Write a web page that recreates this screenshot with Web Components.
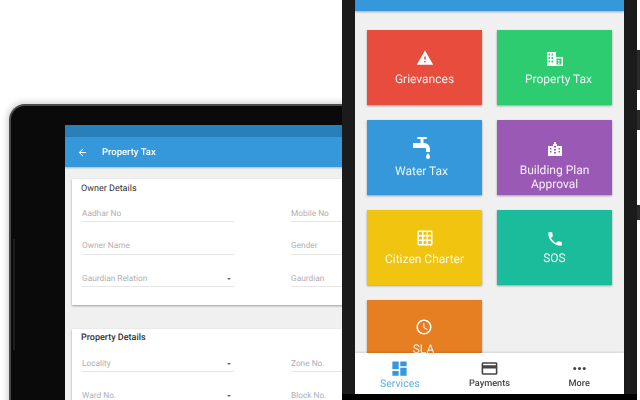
<!DOCTYPE html>
<html lang="en"><head><meta charset="utf-8"><title>Mobile app</title>
<style>
html,body{margin:0;padding:0;background:#fff;height:400px;overflow:hidden;font-family:Roboto,"Liberation Sans",sans-serif;text-rendering:geometricPrecision}
</style></head><body>
<app-stage>
  <tablet-device title-text="Property Tax">
    <form-card heading="Owner Details">
      <form-field>Aadhar No</form-field><form-field>Mobile No</form-field>
      <form-field>Owner Name</form-field><form-field>Gender</form-field>
      <form-field select>Gaurdian Relation</form-field><form-field>Gaurdian</form-field>
    </form-card>
    <form-card heading="Property Details" strong>
      <form-field select>Locality</form-field><form-field>Zone No.</form-field>
      <form-field select>Ward No.</form-field><form-field>Block No.</form-field>
    </form-card>
  </tablet-device>
  <phone-device>
    <service-tile color="#e74c3c" style="--pad:19px;--gap:8px">
      <svg slot="icon" width="18" height="18" viewBox="0 0 24 24"><path fill="#fff" d="M1 21h22L12 2 1 21zm12-3h-2v-2h2v2zm0-4h-2v-4h2v4z"/></svg>Grievances</service-tile>
    <service-tile color="#2ecc71" style="--pad:22px;--gap:5px;--text-x:4px">
      <svg slot="icon" width="16" height="14" viewBox="0 0 16 14"><path fill="#fff" fill-rule="evenodd" d="M0 0h9v5h7v9H0zM1.500 1.500v2h1.500v-2zm3 0v2H6v-2zM1.500 5v2h1.500V5zm3 0v2H6V5zM1.500 8.500v2h1.500v-2zm3 0v2H6v-2zM9.500 6.500v6h5v-6zM11 8h1.500v1.500H11zm0 2.500h1.500V12H11z"/></svg>Property Tax</service-tile>
    <service-tile color="#3498db" style="--pad:17px;--gap:5px;--icon-h:22px;--all-x:-3px">
      <svg slot="icon" width="18" height="22" viewBox="0 0 18 22"><path fill="#fff" d="M5 0h8a1 1 0 0 1 0 2h-2.500v4.500h-3V2H5a1 1 0 0 1 0-2zM0 6h10.500c4 0 6.500 2.500 6.500 6v3h-4v-2.500c0-1-.7-1.500-1.700-1.500H0zM15 16c1.500 2 2 3 2 4a2 2 0 0 1-4 0c0-1 .5-2 2-4z"/></svg>Water Tax</service-tile>
    <service-tile color="#9b59b6" style="--pad:22px;--gap:6px">
      <svg slot="icon" width="14" height="14" viewBox="0 0 14 14"><path fill="#fff" fill-rule="evenodd" d="M5 2h1V0h2v2h1v2h5v10H0V4h5zM6 4v1.500h2V4zM2 6v1.500h1.500V6zm4 1v1.500h2V7zm4.500-1v1.500H12V6zM2 9v1.500h1.500V9zm4 1v1.500h2V10zm4.500-1v1.500H12V9z"/></svg>Building Plan Approval</service-tile>
    <service-tile color="#f1c40f" style="--pad:19px;--gap:8px">
      <svg slot="icon" width="18" height="18" viewBox="0 0 24 24"><path fill="#fff" d="M20 2H4c-1.100 0-2 .9-2 2v16c0 1.100.9 2 2 2h16c1.100 0 2-.9 2-2V4c0-1.100-.9-2-2-2zM8 20H4v-4h4v4zm0-6H4v-4h4v4zm0-6H4V4h4v4zm6 12h-4v-4h4v4zm0-6h-4v-4h4v4zm0-6h-4V4h4v4zm6 12h-4v-4h4v4zm0-6h-4v-4h4v4zm0-6h-4V4h4v4z"/></svg>Citizen Charter</service-tile>
    <service-tile color="#1abc9c" style="--pad:20px;--gap:6px">
      <svg slot="icon" width="18" height="18" viewBox="0 0 24 24"><path fill="#fff" d="M6.620 10.790c1.440 2.830 3.760 5.140 6.590 6.590l2.200-2.200c.27-.27.67-.36 1.020-.24 1.120.37 2.330.57 3.570.57.550 0 1 .45 1 1V20c0 .55-.45 1-1 1-9.390 0-17-7.610-17-17 0-.55.450-1 1-1h3.500c.55 0 1 .45 1 1 0 1.250.2 2.450.57 3.570.11.350.03.740-.25 1.020l-2.200 2.200z"/></svg>SOS</service-tile>
    <service-tile color="#e67e22" style="--pad:18px;--gap:9px;--all-x:-1px">
      <svg slot="icon" width="18" height="18" viewBox="0 0 24 24"><path fill="#fff" d="M11.990 2C6.470 2 2 6.480 2 12s4.470 10 9.990 10C17.520 22 22 17.520 22 12S17.520 2 11.990 2zM12 20c-4.420 0-8-3.580-8-8s3.580-8 8-8 8 3.580 8 8-3.580 8-8 8zm.5-13H11v6l5.250 3.150.75-1.230-4.500-2.670z"/></svg>SLA</service-tile>
    <nav-item slot="nav" active>
      <svg slot="icon" width="19" height="19" viewBox="0 0 24 24"><path fill="#3498db" d="M3 13h8V3H3v10zm0 8h8v-6H3v6zm10 0h8V11h-8v10zm0-18v6h8V3h-8z"/></svg>Services</nav-item>
    <nav-item slot="nav">
      <svg slot="icon" width="19" height="19" viewBox="0 0 24 24"><path fill="#444" d="M20 4H4c-1.110 0-1.990.89-1.990 2L2 18c0 1.110.89 2 2 2h16c1.110 0 2-.89 2-2V6c0-1.110-.89-2-2-2zm0 14H4v-6h16v6zm0-10H4V6h16v2z"/></svg>Payments</nav-item>
    <nav-item slot="nav">
      <svg slot="icon" width="19" height="19" viewBox="0 0 24 24"><path fill="#444" d="M6 10c-1.100 0-2 .9-2 2s.9 2 2 2 2-.9 2-2-.9-2-2-2zm12 0c-1.100 0-2 .9-2 2s.9 2 2 2 2-.9 2-2-.9-2-2-2zm-6 0c-1.100 0-2 .9-2 2s.9 2 2 2 2-.9 2-2-.9-2-2-2z"/></svg>More</nav-item>
  </phone-device>
  <side-key style="top:50px;height:40px"></side-key>
  <side-key style="top:110px;height:20px"></side-key>
  <side-key style="top:205px;height:15px"></side-key>
</app-stage>
<script>
function def(name, html, extra){
  customElements.define(name, class extends HTMLElement{
    constructor(){super();this.attachShadow({mode:'open'}).innerHTML=html;}
    connectedCallback(){ if(extra) extra(this); }
  });
}
def('app-stage',`<style>:host{display:block;position:relative;width:640px;height:400px;overflow:hidden;background:#fff;font-family:Roboto,"Liberation Sans",sans-serif}</style><slot></slot>`);

def('side-key',`<style>:host{display:block;position:absolute;left:637px;width:3px;background:#2a2a2a;filter:blur(.3px)}</style>`);

def('tablet-device',`<style>
:host{display:flex;flex-direction:column;position:absolute;left:9px;top:104px;width:400px;height:340px;box-sizing:border-box;
 background:#0a0a0a;border:solid #4a4a4a;border-width:2px 0 0 2px;border-radius:16px 0 0 0;padding:19px 0 0 54px;
 box-shadow:-1px -1px 7px rgba(0,0,0,.22);filter:blur(.45px)}
.side{position:absolute;left:2px;top:133px;width:2px;height:111px;background:#1d1d1d}
.status{height:12px;background:#2980b9;flex:none}
.bar{height:30px;background:#3498db;flex:none;display:flex;align-items:center;color:#fff;font-size:9.500px;font-weight:500;gap:14.500px;padding-left:11.500px;box-shadow:0 1px 2px rgba(0,0,0,.25);position:relative}
.body{flex:1;background:#f0f0f0;padding:12px 0 0 7px;display:flex;flex-direction:column;gap:24px}
svg{display:block}
</style><div class="side"></div><div class="status"></div>
<div class="bar"><svg width="11" height="11" viewBox="0 0 24 24"><path fill="#fff" d="M20 11H7.830l5.590-5.590L12 4l-8 8 8 8 1.410-1.410L7.830 13H20v-2z"/></svg><span id="t"></span></div>
<div class="body"><slot></slot></div>`, el=>{el.shadowRoot.getElementById('t').textContent=el.getAttribute('title-text');});

def('form-card',`<style>
:host{display:block;background:#fff;padding:0 0 18px 10px;box-shadow:0 1px 2px rgba(0,0,0,.35)}
h3{margin:0;font-size:9px;height:18px;line-height:20px;font-weight:400;color:#333;margin-left:-1px}
:host([strong]) h3{font-weight:500;line-height:18px}
.grid{display:grid;grid-template-columns:152px 152px;column-gap:57px;row-gap:11.500px;margin-top:4px}
</style><h3 id="h"></h3><div class="grid"><slot></slot></div>`, el=>{el.shadowRoot.getElementById('h').textContent=el.getAttribute('heading');});

def('form-field',`<style>
:host{display:flex;align-items:center;justify-content:space-between;height:21px;box-sizing:border-box;padding-top:5px;border-bottom:1px solid #e6e6e6;font-size:8.300px;color:#b0b0b0;white-space:nowrap}
.a{display:none;width:0;height:0;border:2.800px solid transparent;border-top-color:#666;border-bottom:0;margin-right:3.200px}
:host([select]) .a{display:block}
</style><span><slot></slot></span><i class="a"></i>`);

def('phone-device',`<style>
:host{display:flex;flex-direction:column;position:absolute;left:342px;top:0;width:295px;height:400px;box-sizing:border-box;background:#1b1b1b;
 padding:0 13px 6px 13px;filter:blur(.35px)}
.screen{flex:1;min-height:0;display:flex;flex-direction:column;background:#f0f0f0}
.top{height:11px;background:#3498db;flex:none;box-shadow:0 1px 2px rgba(0,0,0,.3);position:relative;z-index:1}
.grid{flex:1;min-height:0;overflow:hidden;display:grid;grid-template-columns:115px 115px;grid-auto-rows:75px;gap:15px;padding:19px 12px 0;align-content:start}
nav{flex:none;height:41px;display:flex;background:#fff;box-shadow:0 -1px 2px rgba(0,0,0,.12);position:relative}
.foot{position:absolute;left:0;right:0;bottom:0;height:6px;background:#000}
</style><div class="screen"><div class="top"></div><div class="grid"><slot></slot></div><nav><slot name="nav"></slot></nav></div><div class="foot"></div>`);

def('service-tile',`<style>
:host{display:flex;flex-direction:column;align-items:center;box-sizing:border-box;padding-top:var(--pad,20px);color:rgba(255,255,255,.9);font-size:12px;line-height:14px;text-align:center;box-shadow:0 1px 2px rgba(0,0,0,.35)}
.i{display:flex;justify-content:center;align-items:flex-start;margin-bottom:var(--gap,3px);min-height:var(--icon-h,15px);height:var(--icon-h,15px);margin-left:calc(var(--all-x,0px)*2)}
.t{max-width:100px;margin-left:calc((var(--all-x,0px) + var(--text-x,0px))*2)}
::slotted(svg){display:block}
</style><div class="i"><slot name="icon"></slot></div><div class="t"><slot></slot></div>`, el=>{el.style.background=el.getAttribute('color');});

def('nav-item',`<style>
:host{flex:1;display:flex;flex-direction:column;align-items:center;padding-top:6px;box-sizing:border-box;font-size:9.200px;font-weight:500;line-height:12px;color:#444}
:host([active]){color:#5dade2;font-size:10.500px;font-weight:400}
.i{height:19px}
::slotted(svg){display:block}
</style><div class="i"><slot name="icon"></slot></div><div><slot></slot></div>`);
</script>
</body></html>
